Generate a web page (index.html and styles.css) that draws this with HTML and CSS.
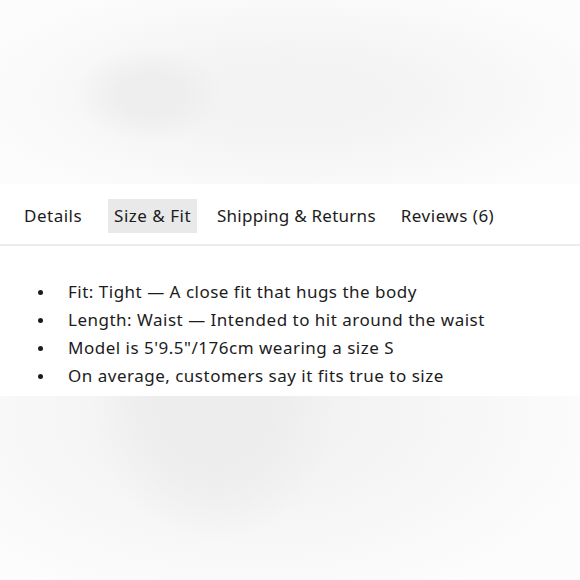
FILE: index.html
```html
<!DOCTYPE html>
<html>
<head>
<meta charset="utf-8">
<link rel="stylesheet" href="styles.css">
</head>
<body>
<div class="hero"></div>
<section class="panel">
  <nav class="tabs">
    <span class="tab tab-details">Details</span>
    <span class="tab active">Size &amp; Fit</span>
    <span class="tab tab-shipping">Shipping &amp; Returns</span>
    <span class="tab">Reviews (6)</span>
  </nav>
  <ul class="fit-list">
    <li>Fit: Tight — A close fit that hugs the body</li>
    <li>Length: Waist — Intended to hit around the waist</li>
    <li>Model is 5'9.5"/176cm wearing a size S</li>
    <li>On average, customers say it fits true to size</li>
  </ul>
</section>
<div class="footer-img"></div>
</body>
</html>
```
FILE: styles.css
```css
html, body {
  margin: 0;
  padding: 0;
  background: #fcfcfc;
}
body {
  width: 580px;
  height: 580px;
  overflow: hidden;
  font-family: "Noto Sans", sans-serif;
  color: #1c1c1c;
  letter-spacing: 0.5px;
}
.hero {
  height: 184px;
  background:
    radial-gradient(ellipse 75px 48px at 150px 95px, #eeeeee 40%, rgba(238,238,238,0) 100%),
    radial-gradient(ellipse 330px 120px at 290px 95px, #f3f3f3 30%, #fcfcfc 100%);
}
.panel {
  background: #ffffff;
  height: 212px;
  display: flex;
  flex-direction: column;
}
.tabs {
  display: flex;
  align-items: flex-start;
  padding: 15px 0 0 18px;
  height: 45px;
  border-bottom: 2px solid #ececec;
  box-sizing: content-box;
  font-size: 17px;
  gap: 14px;
}
.tab {
  padding: 7px 6px;
  line-height: 20px;
}
.tab-details {
  margin-right: 6px;
}
.tab-shipping {
  letter-spacing: 0.25px;
  margin-right: -1px;
}
.tab.active {
  background: #e9e9e9;
}
.fit-list {
  list-style: none;
  margin: 0;
  padding: 32px 0 0 38px;
  font-size: 17px;
  line-height: 28px;
}
.fit-list li {
  display: flex;
  align-items: center;
}
.fit-list li::before {
  content: "";
  width: 5px;
  height: 5px;
  border-radius: 50%;
  background: #1c1c1c;
  margin-right: 25px;
  margin-top: 1px;
  flex: none;
}
.footer-img {
  height: 184px;
  background:
    radial-gradient(ellipse 125px 145px at 215px 0px, #ededed 50%, rgba(237,237,237,0) 100%),
    radial-gradient(ellipse 360px 200px at 250px 20px, #f3f3f3 30%, #fcfcfc 100%);
}
```
